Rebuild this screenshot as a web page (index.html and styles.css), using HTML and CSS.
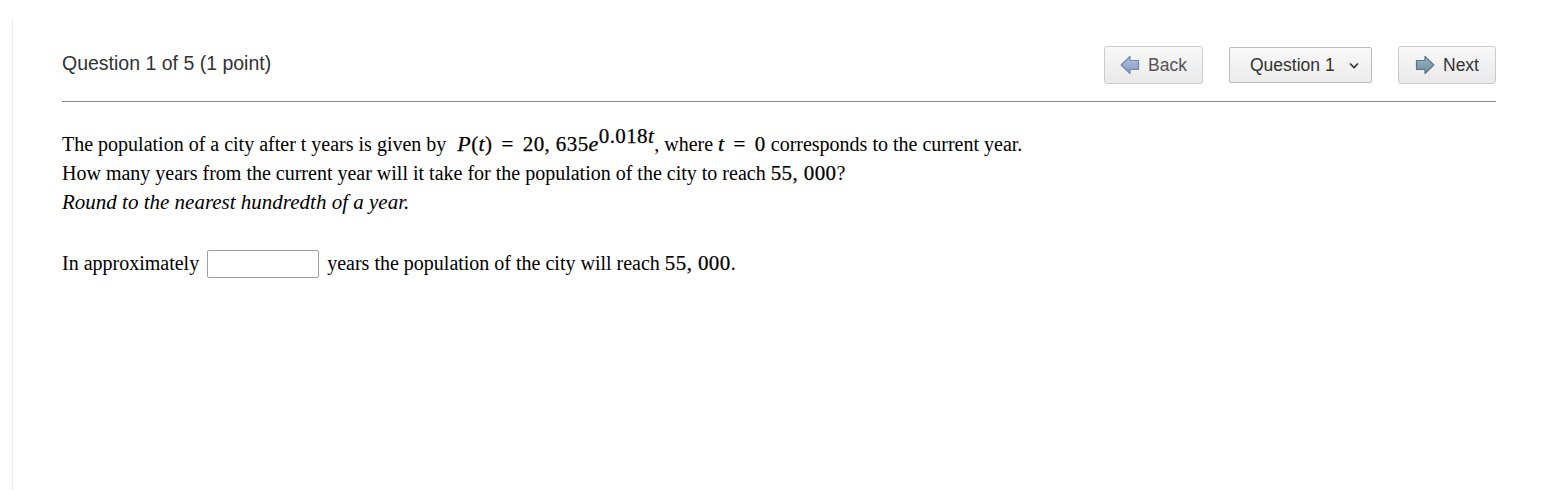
FILE: index.html
```html
<!DOCTYPE html>
<html>
<head>
<meta charset="utf-8">
<link rel="stylesheet" href="styles.css">
</head>
<body>
<div class="frame">
  <div class="content">
    <div class="header">
      <div class="title">Question 1 of 5 (1 point)</div>
      <div class="nav">
        <button class="btn btn-back">
          <svg class="arrow" width="20" height="20" viewBox="0 0 20 20">
            <defs><linearGradient id="gb" x1="0" y1="0" x2="0" y2="1"><stop offset="0" stop-color="#b4c6e0"/><stop offset="1" stop-color="#8199c0"/></linearGradient></defs>
            <path d="M1.2 10 L10 1.5 L10 5.5 L18.5 5.5 L18.5 14.5 L10 14.5 L10 18.5 Z" fill="url(#gb)" stroke="#7088ad" stroke-width="1.2" stroke-linejoin="round"/>
          </svg>
          <span>Back</span>
        </button>
        <div class="select">
          <span>Question 1</span>
          <svg class="chev" width="10" height="7" viewBox="0 0 10 7"><path d="M1 1.5 L5 5.5 L9 1.5" fill="none" stroke="#333" stroke-width="1.6"/></svg>
        </div>
        <button class="btn btn-next">
          <svg class="arrow" width="20" height="20" viewBox="0 0 20 20">
            <defs><linearGradient id="gn" x1="0" y1="0" x2="0" y2="1"><stop offset="0" stop-color="#9fb8c6"/><stop offset="1" stop-color="#6a8a9c"/></linearGradient></defs>
            <path d="M18.8 10 L10 1.5 L10 5.5 L1.5 5.5 L1.5 14.5 L10 14.5 L10 18.5 Z" fill="url(#gn)" stroke="#5a7789" stroke-width="1.2" stroke-linejoin="round"/>
          </svg>
          <span>Next</span>
        </button>
      </div>
    </div>
    <div class="rule"></div>
    <div class="question">
      <p class="line">The population of a city after t years is given by <span class="math ml"><i>P</i>(<i>t</i>)<span class="op">=</span>20, 635<i>e</i><sup>0.018<i>t</i></sup></span>, where <span class="math"><i>t</i><span class="op">=</span>0</span> corresponds to the current year.</p>
      <p class="line">How many years from the current year will it take for the population of the city to reach <span class="math">55, 000</span>?</p>
      <p class="line"><em>Round to the nearest hundredth of a year.</em></p>
      <p class="answer">In approximately <input class="box" type="text"> years the population of the city will reach <span class="math">55, 000</span>.</p>
    </div>
  </div>
</div>
</body>
</html>
```
FILE: styles.css
```css
html, body {
  margin: 0;
  padding: 0;
  background: #fff;
}
.frame {
  margin-left: 12px;
  margin-top: 19px;
  border-left: 1px solid #ececec;
  height: 471px;
}
.content {
  padding-left: 49px;
  width: 1434px;
}
.header {
  display: flex;
  justify-content: space-between;
  align-items: center;
  padding-top: 27px;
  height: 38px;
}
.title {
  font-family: "Liberation Sans", Arial, sans-serif;
  font-size: 19.5px;
  color: #333;
  margin-top: -3px;
}
.nav {
  display: flex;
  align-items: center;
}
.btn {
  display: flex;
  align-items: center;
  justify-content: center;
  gap: 8px;
  height: 38px;
  box-sizing: border-box;
  border: 1px solid #ccc;
  border-radius: 3px;
  background: linear-gradient(#f8f8f8, #e9e9e9);
  font-family: "Liberation Sans", Arial, sans-serif;
  font-size: 17.5px;
  color: #555;
  padding: 0;
}
.btn-back {
  width: 99px;
  margin-right: 26px;
}
.btn-next {
  width: 98px;
  margin-left: 26px;
  color: #333;
}
.arrow {
  display: block;
}
.select {
  display: flex;
  align-items: center;
  justify-content: space-between;
  width: 143px;
  height: 36px;
  box-sizing: border-box;
  border: 1px solid #bbb;
  border-radius: 2px;
  background: linear-gradient(#f9f9f9, #ececec);
  font-family: "Liberation Sans", Arial, sans-serif;
  font-size: 17.5px;
  color: #333;
  padding: 0 12px 0 20px;
}
.chev {
  display: block;
}
.rule {
  margin-top: 17px;
  height: 1px;
  background: #8a8a8a;
}
.question {
  font-family: "Liberation Serif", "Times New Roman", serif;
  font-size: 20px;
  color: #000;
  padding-top: 27px;
}
.line {
  margin: 0;
  line-height: 29px;
}
.line em {
  font-size: 21px;
}
.math {
  font-family: "Liberation Serif", serif;
  font-size: 21px;
  letter-spacing: 0.4px;
  -webkit-text-stroke: 0.25px #000;
}
.math i {
  font-size: 22px;
}
.op {
  margin: 0 9px;
}
.ml {
  margin-left: 6px;
}
.math sup {
  font-size: 21px;
  vertical-align: 8px;
  line-height: 0;
}
.math sup i {
  font-size: 21px;
}
.answer {
  margin: 32px 0 0 0;
  display: flex;
  align-items: center;
  white-space: pre;
  line-height: 29px;
}
.box {
  width: 112px;
  height: 28px;
  box-sizing: border-box;
  border: 1px solid #a0a0a0;
  border-radius: 2px;
  margin: 0 3px 0 3px;
  padding: 0;
}
```
